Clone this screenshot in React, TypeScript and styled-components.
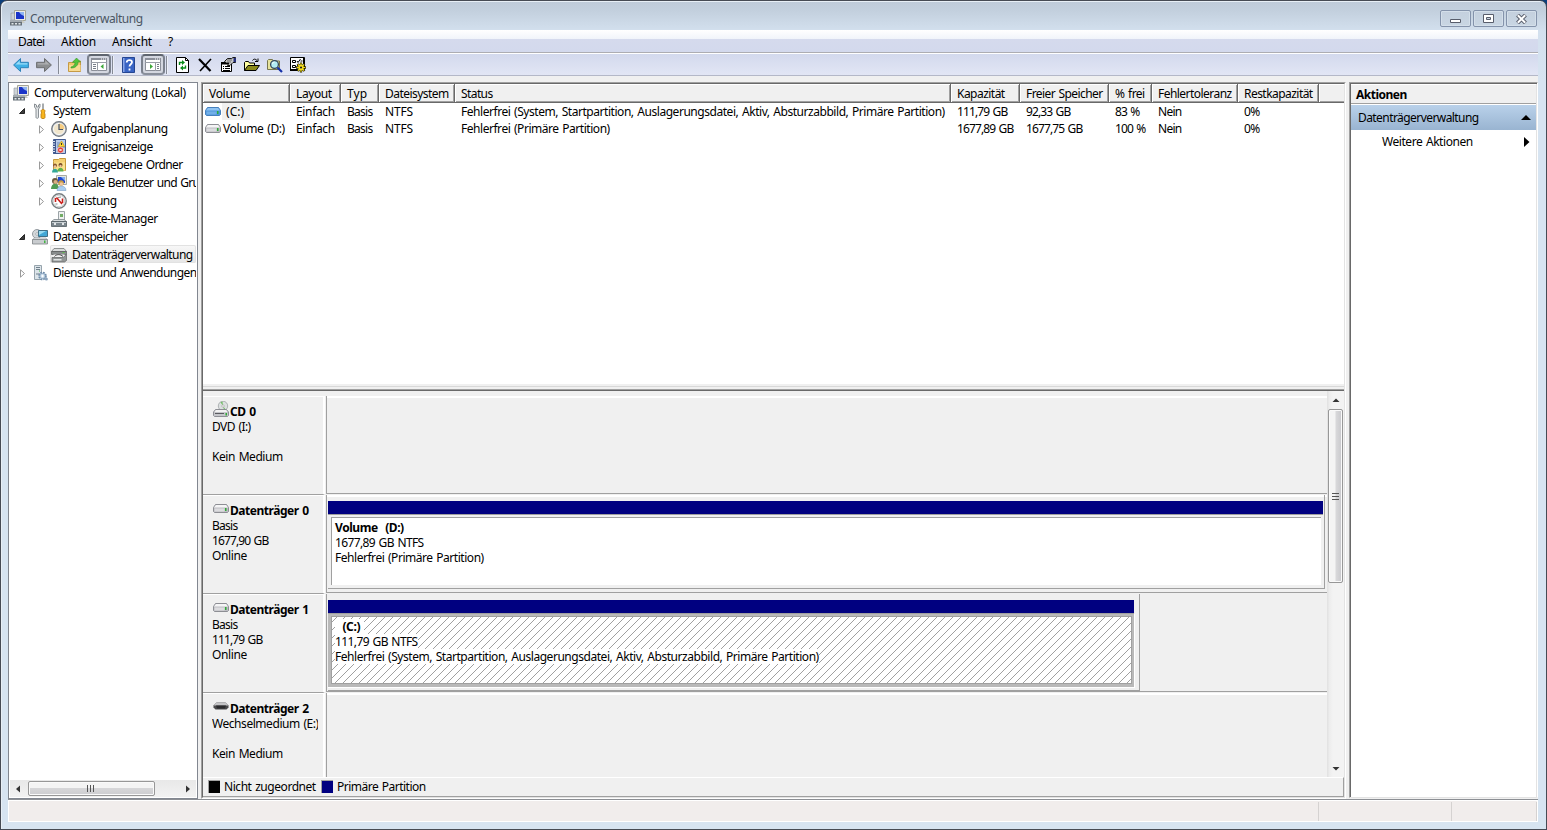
import React, { useLayoutEffect, useRef } from "react";
import styled, { createGlobalStyle, css } from "styled-components";

const Global = createGlobalStyle`
  * { box-sizing: border-box; }
  body { margin: 0; background: #0c3f7c; overflow: hidden; }
  #root { width: 1547px; height: 830px; }
  svg { display: block; flex: none; }
`;

/* ---------- text ---------- */

const Txt = styled.span<{ $bold?: boolean; $color?: string; $bg?: string }>`
  display: inline-block;
  white-space: pre;
  flex: none;
  line-height: 15px;
  word-spacing: 1px;
  font-weight: ${(p) => (p.$bold ? 700 : 400)};
  color: ${(p) => p.$color || "#000"};
  background: ${(p) => p.$bg || "transparent"};
`;

type LabelProps = { children: string; w?: number; bold?: boolean; color?: string; bg?: string };

/* Tracks the text so that its letters span the given width, side bearing included. */
function Label({ children, w, bold, color, bg }: LabelProps) {
  const ref = useRef<HTMLSpanElement>(null);
  useLayoutEffect(() => {
    const el = ref.current;
    if (!el || !w) return;
    el.style.letterSpacing = "0px";
    const natural = el.getBoundingClientRect().width;
    el.style.letterSpacing = `${(w - 0.8 - natural) / (children.length - 1)}px`;
  }, [children, w]);
  return (
    <Txt ref={ref} $bold={bold} $color={color} $bg={bg}>
      {children}
    </Txt>
  );
}

/* ---------- window frame ---------- */

const Window = styled.div`
  width: 1547px;
  height: 830px;
  display: flex;
  flex-direction: column;
  padding: 0 8px 7px 7px;
  border: 1px solid #474b54;
  border-radius: 7px 7px 0 0;
  background: linear-gradient(#bfcbd9 0, #c3d0de 10px, #d3e0ee 30px, #d7e4f1 80px);
  box-shadow: inset 1px 1px 0 #e8eff6;
  font-family: "Noto Sans", "Open Sans", sans-serif;
  font-size: 12px;
`;

const TitleBar = styled.div`
  height: 29px;
  flex: none;
  display: flex;
  align-items: flex-start;
  justify-content: space-between;
`;

const TitleText = styled.div`
  display: flex;
  align-items: center;
  gap: 4px;
  padding: 9px 0 0 2px;
`;

const WinButtons = styled.div`
  display: flex;
  gap: 2px;
  padding: 9px 1px 0 0;
`;

const WinButton = styled.div`
  width: 31px;
  height: 17px;
  display: flex;
  align-items: center;
  justify-content: center;
  border: 1px solid #8493ab;
  border-radius: 2px;
  background: linear-gradient(#c4d0de, #c9d6e3);
  box-shadow: inset 0 0 0 1px #d4dfea;
`;

const MenuBar = styled.div`
  height: 23px;
  flex: none;
  display: flex;
  padding: 3px 0 0 10px;
  border-bottom: 1px solid #adadb2;
  background: linear-gradient(#ffffff 0, #f1f4fa 9px, #d5daed 9px, #d3d9ed 100%);
`;

const MenuItem = styled.div<{ $w: number }>`
  width: ${(p) => p.$w}px;
  flex: none;
`;

const ToolBar = styled.div`
  height: 23px;
  flex: none;
  display: flex;
  align-items: center;
  padding-left: 5px;
  border-top: 1px solid #fff;
  border-bottom: 1px solid #b4b8c8;
  background: linear-gradient(#d3d9ed, #e2e6f5);
`;

const Tool = styled.div<{ $gap: number; $pressed?: boolean }>`
  margin-left: ${(p) => p.$gap}px;
  ${(p) =>
    p.$pressed &&
    css`
      width: 24px;
      height: 21px;
      display: flex;
      align-items: center;
      justify-content: center;
      border: 2px solid #6c727f;
      border-color: #5f656f #7b818d #898f9b;
      border-radius: 4px;
      background: #d4d7e0;
    `}
`;

const ToolSep = styled.div<{ $gap: number }>`
  margin-left: ${(p) => p.$gap}px;
  width: 2px;
  height: 18px;
  background: #868b96;
  border-right: 1px solid #eceff8;
`;

const Body = styled.div`
  flex: 1;
  min-height: 0;
  display: flex;
  gap: 3px;
  padding-top: 6px;
  background: #f0f0f0;
`;

const StatusBar = styled.div`
  height: 23px;
  flex: none;
  display: flex;
  justify-content: flex-end;
  padding-right: 1px;
  border-top: 1px solid #8c8f94;
  border-bottom: 1px solid #fff;
  background: #f1edec;
  box-shadow: inset 0 1px 0 #fff, inset 1px 0 0 #fff, inset -1px 0 0 #fff;
`;

const StatusCell = styled.div<{ $w: number; $last?: boolean }>`
  width: ${(p) => p.$w}px;
  margin-top: 2px;
  border-left: 1px solid #d5d2d1;
  border-right: ${(p) => (p.$last ? "1px solid #d5d2d1" : "0")};
`;

/* ---------- tree ---------- */

const TreePane = styled.div`
  width: 190px;
  flex: none;
  display: flex;
  flex-direction: column;
  overflow: hidden;
  border: 1px solid #828790;
  background: #fff;
`;

const TreeList = styled.div`
  flex: 1;
  margin-right: 1px;
  overflow: hidden;
`;

const TreeRow = styled.div<{ $level: number }>`
  height: 18px;
  display: flex;
  align-items: center;
  padding-left: ${(p) => (p.$level === 0 ? 4 : p.$level === 1 ? 9 : 28)}px;
`;

const Expander = styled.div<{ $open?: boolean }>`
  width: 14px;
  height: 16px;
  flex: none;
  display: flex;
  align-items: center;
  padding: ${(p) => (p.$open ? "2px 0 0 0" : "3px 0 0 1px")};
`;

const TreeIcon = styled.div`
  height: 18px;
  padding-top: 2px;
`;

const TreeItem = styled.div<{ $selected?: boolean }>`
  display: flex;
  align-items: center;
  gap: 5px;
  height: 18px;
  flex: none;
  ${(p) =>
    p.$selected &&
    css`
      width: 146px;
      margin-left: -1px;
      padding-left: 1px;
      border-radius: 2px;
      background: linear-gradient(#f8f8f8, #e6e6e6);
      box-shadow: inset 0 0 0 1px #e2e2e2;
    `}
`;

const HScroll = styled.div`
  height: 17px;
  flex: none;
  display: flex;
  align-items: center;
  margin: 0 1px 1px;
  padding: 0 6px;
  background: linear-gradient(#e8e8e8, #f2f2f2);
`;

const HThumb = styled.div`
  width: 127px;
  height: 15px;
  margin: 0 31px 0 8px;
  display: flex;
  align-items: center;
  justify-content: center;
  border: 1px solid #979797;
  border-radius: 2px;
  background: linear-gradient(#f4f4f4 0 45%, #d6d6d8 50%, #cdcdd0);
  box-shadow: inset 0 0 0 1px #fafafa;
`;

/* ---------- centre ---------- */

const Center = styled.div`
  width: 1145px;
  flex: none;
  display: flex;
  flex-direction: column;
  border: 1px solid;
  border-color: #a0a0a0 #fff #fff #a0a0a0;
  background: #f0f0f0;
`;

const Inner = styled.div`
  flex: 1;
  min-height: 0;
  display: flex;
  flex-direction: column;
  border: 1px solid;
  border-color: #696969 #e3e3e3 #e3e3e3 #696969;
`;

const ListArea = styled.div`
  height: 300px;
  flex: none;
  background: #fff;
`;

const HeaderRow = styled.div`
  display: flex;
  height: 19px;
  background: #f0f0f0;
  border-bottom: 1px solid #696969;
`;

const HeaderCell = styled.div<{ $w: number }>`
  width: ${(p) => p.$w}px;
  flex: none;
  padding: 1px 0 0 6px;
  overflow: hidden;
  border-right: 1px solid #696969;
  box-shadow: inset 1px 1px 0 #fff, inset -1px -1px 0 #a0a0a0;
`;

const HeaderRest = styled.div`
  flex: 1;
  box-shadow: inset 1px 1px 0 #fff, inset 0 -1px 0 #a0a0a0;
`;

const ListRow = styled.div`
  display: flex;
  height: 17px;
  align-items: center;
`;

const Cell = styled.div<{ $w: number; $pad: number }>`
  width: ${(p) => p.$w}px;
  flex: none;
  height: 17px;
  display: flex;
  align-items: center;
  padding-left: ${(p) => p.$pad}px;
`;

const Focused = styled.div`
  height: 17px;
  display: flex;
  align-items: center;
  margin-left: 1px;
  padding: 0 6px 0 4px;
  background: #f0f0f0;
`;

const IconGap = styled.div`
  padding-left: 2px;
`;

const Splitter = styled.div`
  height: 7px;
  flex: none;
  background: #f0f0f0;
  border-bottom: 1px solid #696969;
  box-shadow: inset 0 -1px 0 #a0a0a0, inset 0 -3px 0 #f0f0f0, inset 0 -4px 0 #d8d8d8;
`;

const DiskArea = styled.div`
  flex: 1;
  min-height: 0;
  display: flex;
`;

const DiskList = styled.div`
  width: 1124px;
  flex: none;
  padding-top: 5px;
  overflow: hidden;
`;

const DiskRow = styled.div`
  height: 99px;
  display: flex;
`;

const DiskHead = styled.div`
  width: 122px;
  flex: none;
  overflow: hidden;
  padding: 7px 5px 0 9px;
  border-top: 1px solid #fff;
  border-right: 2px solid #fff;
  border-bottom: 1px solid #a0a0a0;
`;

const DiskTitle = styled.div`
  display: flex;
  height: 15px;
  align-items: flex-start;
`;

const Line = styled.div`
  height: 15px;
  display: flex;
  overflow: hidden;
`;

const DiskBody = styled.div<{ $top?: boolean }>`
  flex: 1;
  height: 98px;
  margin-left: 1px;
  padding-left: 1px;
  border-left: 1px solid #a0a0a0;
  border-bottom: 1px solid #a0a0a0;
  box-shadow: inset 0 ${(p) => (p.$top ? 2 : 0)}px 0 #fff, inset 0 ${(p) => (p.$top ? 1 : 0)}px 0 #f0f0f0;
`;

const Frame = styled.div<{ $w: number; $h: number }>`
  width: ${(p) => p.$w}px;
  height: ${(p) => p.$h}px;
  padding-top: 6px;
  border-right: 1px solid #a0a0a0;
  border-bottom: 1px solid #a0a0a0;
`;

const Bar = styled.div<{ $w: number }>`
  width: ${(p) => p.$w}px;
  height: 14px;
  background: #000080;
  border-bottom: 1px solid #a0a0a0;
`;

const Partition = styled.div<{ $w: number; $selected?: boolean }>`
  width: ${(p) => p.$w}px;
  height: ${(p) => (p.$selected ? 74 : 70)}px;
  padding: 2px 3px 3px;
  background: ${(p) => (p.$selected ? "#b9b9b9" : "#f0f0f0")};
  border-right: ${(p) => (p.$selected ? "1px solid #fff" : "0")};
  border-bottom: ${(p) => (p.$selected ? "1px solid #fff" : "0")};
`;

const PartitionBox = styled.div<{ $selected?: boolean }>`
  position: relative;
  height: 68px;
  padding: 2px 0 0 3px;
  margin-right: -1px;
  background: #fff;
  border: 1px solid #a0a0a0;
  ${(p) => !p.$selected && css`border-right: 0; border-bottom: 0;`}
`;

const HatchLayer = styled.svg`
  position: absolute;
  inset: 0;
  width: 100%;
  height: 100%;
`;

const PartitionText = styled.div`
  position: relative;
  display: flex;
  flex-direction: column;
  align-items: flex-start;
  height: 45px;
`;

const VScroll = styled.div`
  width: 17px;
  flex: none;
  display: flex;
  flex-direction: column;
  align-items: center;
  padding: 7px 0 6px;
  background: linear-gradient(90deg, #e3e3e3 1px, #ececec 2px, #f3f3f3 6px);
`;

const VThumb = styled.div`
  width: 15px;
  height: 174px;
  margin: 7px 0 auto;
  display: flex;
  align-items: center;
  justify-content: center;
  border: 1px solid #979797;
  border-radius: 2px;
  background: linear-gradient(90deg, #f4f4f4 0 45%, #d8d8da 55%, #c8c8cc);
  box-shadow: inset 0 0 0 1px #fafafa;
`;

const Legend = styled.div`
  height: 20px;
  flex: none;
  display: flex;
  align-items: center;
  padding: 0 0 1px 4px;
  border-top: 1px solid #fff;
  border-right: 1px solid #a0a0a0;
  border-bottom: 1px solid #a0a0a0;
`;

const LegendItem = styled.div<{ $w: number }>`
  width: ${(p) => p.$w}px;
  display: flex;
  align-items: center;
  flex: none;
`;

const Swatch = styled.div<{ $c: string }>`
  width: 12px;
  height: 13px;
  border: 1px solid #a0a0a0;
  border-right: 0;
  border-bottom: 0;
  background: ${(p) => p.$c};
  margin: 0 4px 0 1px;
`;

/* ---------- actions ---------- */

const Actions = styled.div`
  width: 189px;
  height: 716px;
  flex: none;
  border: 1px solid;
  border-color: #a0a0a0 #fff #e3e3e3 #a0a0a0;
  background: #fff;
  box-shadow: inset 1px 1px 0 #696969, inset -1px 0 0 #e3e3e3;
`;

const ActionsHead = styled.div`
  height: 20px;
  margin: 1px 1px 0 1px;
  padding: 1px 0 0 5px;
  background: #f0f0f0;
  border-top: 1px solid #fff;
  border-bottom: 1px solid #a0a0a0;
`;

const ActionRow = styled.div<{ $head?: boolean }>`
  height: ${(p) => (p.$head ? 25 : 23)}px;
  margin: ${(p) => (p.$head ? "1px 1px 0 1px" : "0 1px")};
  display: flex;
  align-items: center;
  justify-content: space-between;
  padding: 0 5px 0 ${(p) => (p.$head ? 7 : 31)}px;
  background: ${(p) => (p.$head ? "linear-gradient(#b9d1ea, #99b4d1)" : "#fff")};
`;

/* ---------- icons ---------- */

const Svg = ({ children, w = 16, h = 16 }: { children: React.ReactNode; w?: number; h?: number }) => (
  <svg width={w} height={h} viewBox={`0 0 ${w} ${h}`} fill="none">
    {children}
  </svg>
);

const ComputerIcon = () => (
  <Svg>
    <path d="M4.500.5h11v10h-11z" fill="#ecece6" stroke="#a4a496" />
    <path d="M6 2h8v7H6z" fill="#1b35c8" />
    <path d="M9 2h5v4C12 5 10 4 9 2z" fill="#8fb4f3" />
    <path d="M8 10.500h5l2 2.500H8z" fill="#c9cac2" />
    <path d="M1 3h3.500v7H1z" fill="#cdd3d8" stroke="#8d949b" strokeWidth=".6" />
    <path d="M0 10h12v2H0z" fill="#a3abb1" />
    <path d="M0 12h12v3.500H0z" fill="#667078" />
    <path d="M1.500 13h2v1.500h-2zM5 13h2v1.500H5zM8.500 13h2v1.500h-2z" fill="#dfe5e8" />
  </Svg>
);

const ArrowIcon = ({ flip, dark, mid, light }: { flip?: boolean; dark: string; mid: string; light: string }) => (
  <Svg>
    <g transform={flip ? "translate(16 0) scale(-1 1)" : undefined}>
      <path d="M.6 8L7.500 1.500v3.800h7.900v5.400H7.500v3.800z" fill={mid} stroke={dark} strokeLinejoin="round" />
      <path d="M2.500 7.600L6.700 3.700v2.500h7.700v1.400z" fill={light} />
    </g>
  </Svg>
);

const FolderUpIcon = () => (
  <Svg>
    <path d="M1.500 5.500h4l1-1.500h7v10.500h-12z" fill="#efc76f" stroke="#c59a45" />
    <path d="M2 8h11.500v6H2z" fill="#f8db92" />
    <path d="M4 10c3-1 4-2 4-4.500H5.500L9.500 1 13.500 5H11c0 4-3 6-7 6z" fill="#54c43a" stroke="#36962b" strokeWidth=".6" />
  </Svg>
);

const PaneIcon = ({ right }: { right?: boolean }) => (
  <Svg w={18} h={15}>
    <path d="M1.500 1.500h15v12h-15z" fill="#fff" stroke="#8b8f99" />
    <path d="M1 1h16v2H1z" fill="#8b8f99" />
    <path d="M11 1.500h1v1h-1zM13 1.500h1v1h-1zM15 1.500h1v1h-1z" fill="#fff" />
    <path d="M1 5.500h16" stroke="#9a9ea7" />
    {right ? (
      <>
        <path d="M11.500 5.500V14" stroke="#9a9ea7" />
        <path d="M6 7v5l3-2.500z" fill="#3da739" />
        <path d="M13 7.500h2M13 9.500h2M13 11.500h2" stroke="#777d88" />
      </>
    ) : (
      <>
        <path d="M7.500 5.500V14" stroke="#9a9ea7" />
        <path d="M13.500 7v5l-3-2.500z" fill="#3da739" />
        <path d="M3 7.500h3M3 9.500h3M3 11.500h3" stroke="#777d88" />
      </>
    )}
  </Svg>
);

const HelpIcon = () => (
  <Svg>
    <path d="M2.500.5h12v15h-12z" fill="#3863c4" stroke="#254692" />
    <path d="M3 1h1.500v14H3z" fill="#89a6e8" />
    <path d="M6.700 5.500c0-3.200 5.300-3 5.300-.2 0 2-2.500 2-2.500 4.200M9.500 11.500v2" stroke="#fff" strokeWidth="1.800" />
  </Svg>
);

const RefreshIcon = () => (
  <Svg>
    <path d="M2.500.5h9l3 3v12h-12z" fill="#fff" stroke="#000" />
    <path d="M11.500.5v3h3" stroke="#000" />
    <path d="M5.500 8V5.500H9M11.500 8.500V11H8" stroke="#0a8a1a" strokeWidth="1.400" />
    <path d="M8 3l3 2.500L8 8zM9 8.500v5L6 11z" fill="#0a8a1a" />
  </Svg>
);

const DeleteIcon = () => (
  <Svg>
    <path d="M2 2l11.500 12" stroke="#000" strokeWidth="2.200" />
    <path d="M14 2L3 14" stroke="#000" strokeWidth="1.600" />
  </Svg>
);

const PropsIcon = () => (
  <Svg>
    <path d="M.5 5.500h10v9H.5z" fill="#fff" stroke="#000" />
    <path d="M0 5h11v2.500H0z" fill="#000" />
    <path d="M2 9.500h1M4 9.500h5M2 11.500h1M4 11.500h5M2 13.500h7" stroke="#000" />
    <path d="M3.500 4.500l3-3h4l1.500-1h2.500v5h-2.500L9 8.500H6.500L8 6H5.500z" fill="#c8c8c8" stroke="#000" strokeWidth=".9" />
    <path d="M6 3h5M6 5h4" stroke="#555" strokeWidth=".8" />
    <path d="M12.500 1H15v4h-2.500z" fill="#26307a" />
  </Svg>
);

const OpenIcon = () => (
  <Svg>
    <path d="M.5 13.500v-8l1-1h3l1 1.500h5V8" fill="#ffffa0" stroke="#000" />
    <path d="M.5 13.500l3.500-5h11.500l-3.500 5z" fill="#8a8a1a" stroke="#000" />
    <path d="M8.500 3.500c1-1.800 3-1.800 4.500 0M14 1.500v3h-3" stroke="#000" />
  </Svg>
);

const SearchIcon = () => (
  <Svg>
    <path d="M.5 12.500v-9l1-1h4l1 1.500h6v8.500z" fill="#e6e39c" stroke="#77764d" />
    <circle cx="7.500" cy="7.500" r="3.900" fill="#b2ecf3" stroke="#35475c" strokeWidth="1.300" />
    <path d="M5.500 7c0-1 1-2 2-2" stroke="#fff" />
    <path d="M10.500 10.500l4.500 4.500" stroke="#1430a8" strokeWidth="2.200" />
  </Svg>
);

const SettingsIcon = () => (
  <Svg>
    <path d="M.5.5h14v12H.5z" fill="#fff" stroke="#000" />
    <path d="M14 1v6M0 13h8" stroke="#000" strokeWidth="2" />
    <path d="M2.500 3.500h3v2h-3zM2.500 8.500h3v2h-3z" fill="#fff" stroke="#000" />
    <path d="M7 4l1 1.500L10.500 2M7 8.500h1.500M10.500 4h2" stroke="#000" />
    <path d="M11 5.500v10M6 10.500h10M7.500 7l7 7M14.500 7l-7 7" stroke="#2a2600" strokeWidth="2.300" />
    <path d="M11 6.200v8.600M6.700 10.500h8.600M8 7.500l6 6M14 7.500l-6 6" stroke="#f4dc1e" strokeWidth="1.200" />
    <circle cx="11" cy="10.500" r="2.700" fill="#f4dc1e" />
    <circle cx="11" cy="10.500" r="1.100" fill="#222" />
  </Svg>
);

const ToolsIcon = () => (
  <Svg>
    <path d="M2.500 1v3l1.500 2v8.500c0 1 2.500 1 2.500 0V6L8 4V1L6.500 2v2H4.500V2z" fill="#e2e5e7" stroke="#7f868b" strokeWidth=".9" />
    <path d="M11 .5v6" stroke="#8a8f93" strokeWidth="1.500" />
    <path d="M9 8c0-2 4-2 4 0l-.6 2 .6 1v3.500c0 1.500-4 1.500-4 0V11l.6-1z" fill="#f7b51e" stroke="#b9780b" strokeWidth=".8" />
  </Svg>
);

const ClockIcon = () => (
  <Svg>
    <circle cx="8" cy="8" r="7.300" fill="#c3c8cc" stroke="#71787f" strokeWidth="1.200" />
    <circle cx="8" cy="8" r="5.600" fill="#f1e6cc" stroke="#fff" strokeWidth=".8" />
    <path d="M8 2.500A5.500 5.500 0 0 1 13.500 8H8z" fill="#f5cc81" />
    <path d="M8 3v5.500h4" stroke="#47556b" strokeWidth="1.200" />
  </Svg>
);

const EventIcon = () => (
  <Svg>
    <path d="M2.500.5h12v14h-12z" fill="#b8cbe8" stroke="#435b91" />
    <path d="M2 1h3v13.500H2z" fill="#40588e" />
    <path d="M1 2.500h3M1 5h3M1 7.500h3M1 10h3M1 12.500h3" stroke="#dfe6f2" />
    <path d="M6 4h3M6 6h2M6 8h8M6 12h3" stroke="#6c86b7" />
    <path d="M10.500 2l3.200 5.500H7.300z" fill="#ffd92f" stroke="#c49511" strokeWidth=".6" />
    <circle cx="9.500" cy="11" r="3" fill="#e33d35" stroke="#fff" strokeWidth=".5" />
    <path d="M8.500 10l2 2M10.500 10l-2 2" stroke="#fff" />
    <path d="M10.500 4v2" stroke="#333" />
  </Svg>
);

const ShareIcon = () => (
  <Svg>
    <path d="M2.500 4.500v-2h5l1-1h6v12h-12z" fill="#f4cf70" stroke="#c79b3b" />
    <path d="M3 5.500h11v8H3z" fill="#fbe08c" />
    <circle cx="4" cy="8.500" r="2" fill="#8b5730" />
    <circle cx="9.500" cy="8" r="2" fill="#754823" />
    <path d="M1 15.500c0-5 6-5 6 0z" fill="#35a898" />
    <path d="M6.500 14.500c0-5 6-5 6 0z" fill="#60b24c" />
    <circle cx="4" cy="9.500" r="1.200" fill="#efc39d" />
    <circle cx="9.500" cy="9" r="1.200" fill="#efc39d" />
  </Svg>
);

const UsersIcon = () => (
  <Svg>
    <path d="M5.500.5h10v9h-10z" fill="#e5e6e0" stroke="#a8aaa2" />
    <path d="M7 2h7v6H7z" fill="#2147cf" />
    <path d="M10 2h4v4z" fill="#84aef1" />
    <circle cx="4" cy="6" r="3" fill="#6d5b3d" />
    <circle cx="4.500" cy="7" r="2" fill="#d9ad83" />
    <path d="M0 14c0-7 8-7 8 0z" fill="#4f9b54" />
    <circle cx="10" cy="8" r="2.800" fill="#c99c43" />
    <circle cx="10.300" cy="9" r="1.800" fill="#f0c69d" />
    <path d="M6 15.500c0-6 9-6 9 0z" fill="#a9cdf0" stroke="#6f94bd" strokeWidth=".5" />
  </Svg>
);

const PerfIcon = () => (
  <Svg>
    <circle cx="8" cy="8" r="7.200" fill="#fff" stroke="#777d80" strokeWidth="1.400" />
    <circle cx="8" cy="8" r="5.700" stroke="#c1c6c8" strokeWidth=".8" />
    <path d="M4.500 5v4M5.500 4.500l5.500 6.500M11.500 5.500v4.500" stroke="#ca1f1b" strokeWidth="1.600" />
    <path d="M7 4.500l3-.5M4.500 11h2" stroke="#888" />
  </Svg>
);

const DeviceIcon = () => (
  <Svg>
    <path d="M7.500.5h6v9h-6z" fill="#eef0f0" stroke="#9ca4a7" />
    <path d="M9 3h3v3H9z" fill="#72ac66" />
    <path d="M3 8.500h10l2.500 2H.5z" fill="#d8dcde" stroke="#7d868b" strokeWidth=".8" />
    <path d="M.5 10.500h15v5H.5z" fill="#7b868d" stroke="#535d63" strokeWidth=".8" />
    <path d="M1 11h14v1H1z" fill="#c6cdd1" />
    <path d="M3 12h2v2H3zM11 12h2v2h-2z" fill="#e3e6e8" />
  </Svg>
);

const StorageIcon = () => (
  <Svg>
    <circle cx="5" cy="5" r="4.500" fill="#d4d8db" stroke="#949ba0" />
    <circle cx="5" cy="5" r="1.300" fill="#fff" stroke="#8b9297" strokeWidth=".6" />
    <path d="M6.500 1.500h9v6h-9z" fill="#43a8d6" stroke="#427187" />
    <path d="M7 2h7l-7 4z" fill="#9adcf2" />
    <path d="M2 9h12l1.500 2H.5z" fill="#f2f3f4" stroke="#9a9fa3" strokeWidth=".7" />
    <path d="M.5 10.500h15v4.500H.5z" fill="#c9cccf" stroke="#7e8387" strokeWidth=".8" />
    <path d="M12 11.500h1.500V14H12z" fill="#42b642" />
  </Svg>
);

const DiskMgmtIcon = () => (
  <Svg>
    <path d="M3 1.500h10l2.500 3H.5z" fill="#dadcdc" stroke="#747777" strokeWidth=".8" />
    <path d="M.5 4.500h15v3H.5z" fill="#888c8c" stroke="#565959" strokeWidth=".7" />
    <path d="M2.500 7.500h11v3h-11z" fill="#f1f1f1" />
    <path d="M3.500 9.500c2-2.500 6-2.500 8.500 0" stroke="#444" />
    <path d="M1 10.500h11l3.500-3v6l-2 1.500H1z" fill="#929696" stroke="#5e6161" strokeWidth=".7" />
    <path d="M2.500 12h8v1.500h-8z" fill="#e1e4e4" />
    <path d="M11.500 5.500h2" stroke="#5cc34b" />
  </Svg>
);

const ServicesIcon = () => (
  <Svg>
    <path d="M2.500.5h7v14h-7z" fill="#dce4e9" stroke="#97a4ad" />
    <path d="M4 2.500h4M4 4.500h4M4 9h4" stroke="#71818d" />
    <path d="M7 6h1" stroke="#49b54c" />
    <circle cx="10.500" cy="11" r="3.300" fill="#bfd6ea" stroke="#718daa" strokeWidth="2" strokeDasharray="1.700 .9" />
    <circle cx="10.500" cy="11" r="2.500" fill="#d2e2f0" stroke="#86a0b9" strokeWidth=".6" />
    <circle cx="10.500" cy="11" r="1" fill="#fff" />
    <circle cx="14.400" cy="14" r="1.500" fill="#8aa3bd" />
  </Svg>
);

const DriveIcon = ({ top = "#f5f5f6", front = "#bdbdc3", edge = "#85868c" }) => (
  <Svg h={9}>
    <path d="M2.500.5h11l2 3v4l-1 1H1.500l-1-1v-4z" fill={front} stroke={edge} strokeWidth=".9" />
    <path d="M3 1h10l2 2.500H1z" fill={top} />
    <path d="M1.500 4.500h10v3h-10z" fill={top} opacity=".55" />
    <path d="M12 4h1.500v3H12z" fill="#2eab36" />
  </Svg>
);

const CdIcon = () => (
  <Svg>
    <ellipse cx="10" cy="5" rx="4.700" ry="4.800" fill="#dcdfe0" stroke="#a0a4a6" strokeWidth=".8" />
    <path d="M10 5L7.500 1.200l2-.7zM10 5l3 4h-2z" fill="#72bf67" />
    <circle cx="10" cy="5" r="1.200" fill="#fff" stroke="#888" strokeWidth=".5" />
    <path d="M2.500 8.500h11l2 2.500v3.500l-1 1H1.500l-1-1V11z" fill="#c5c6ca" stroke="#85868c" strokeWidth=".9" />
    <path d="M3 9h10l1.500 2h-13z" fill="#f2f2f2" />
    <path d="M2 12.500h9" stroke="#5a5b60" />
    <path d="M12.500 12H14v2.500h-1.500z" fill="#2eab36" />
  </Svg>
);

const RemovableIcon = () => (
  <Svg h={9}>
    <path d="M3.500.5h9l3 3v2l-2 2H2.500l-2-2v-2z" fill="#4a4a4c" />
    <path d="M3.500.5h9l3 3H.5z" fill="#c4c4c6" />
    <path d="M3 3.500h10l-1 3H4z" fill="#2c2c2e" />
  </Svg>
);

const Triangle = ({ d, w, h, fill = "#000", stroke }: { d: string; w: number; h: number; fill?: string; stroke?: string }) => (
  <svg width={w} height={h} viewBox={`0 0 ${w} ${h}`}>
    <path d={d} fill={fill} stroke={stroke} />
  </svg>
);

const Hatch = () => (
  <HatchLayer shapeRendering="crispEdges">
    <defs>
      <pattern id="hatch" width="8" height="8" patternUnits="userSpaceOnUse">
        {[0, 1, 2, 3, 4, 5, 6, 7].map((i) => (
          <rect key={i} x={(12 - i) % 8} y={i} width="1" height="1" fill="#a0a0a0" />
        ))}
      </pattern>
    </defs>
    <rect width="100%" height="100%" fill="url(#hatch)" />
  </HatchLayer>
);

/* ---------- data ---------- */

type Node = { level: number; text: string; w?: number; icon: React.ReactNode; state?: "open" | "closed"; selected?: boolean };

const tree: Node[] = [
  { level: 0, text: "Computerverwaltung (Lokal)", w: 153, icon: <ComputerIcon /> },
  { level: 1, text: "System", w: 39, icon: <ToolsIcon />, state: "open" },
  { level: 2, text: "Aufgabenplanung", w: 97, icon: <ClockIcon />, state: "closed" },
  { level: 2, text: "Ereignisanzeige", w: 82, icon: <EventIcon />, state: "closed" },
  { level: 2, text: "Freigegebene Ordner", w: 112, icon: <ShareIcon />, state: "closed" },
  { level: 2, text: "Lokale Benutzer und Gruppen", w: 155, icon: <UsersIcon />, state: "closed" },
  { level: 2, text: "Leistung", w: 46, icon: <PerfIcon />, state: "closed" },
  { level: 2, text: "Geräte-Manager", w: 87, icon: <DeviceIcon /> },
  { level: 1, text: "Datenspeicher", w: 76, icon: <StorageIcon />, state: "open" },
  { level: 2, text: "Datenträgerverwaltung", w: 122, icon: <DiskMgmtIcon />, selected: true },
  { level: 1, text: "Dienste und Anwendungen", w: 145, icon: <ServicesIcon />, state: "closed" },
];

type Col = { title: string; tw: number; w: number; c: [string, number]; d: [string, number] };

const cols: Col[] = [
  { title: "Volume", tw: 42, w: 87, c: ["(C:)", 19], d: ["Volume (D:)", 63] },
  { title: "Layout", tw: 37, w: 51, c: ["Einfach", 40], d: ["Einfach", 40] },
  { title: "Typ", tw: 21, w: 38, c: ["Basis", 27], d: ["Basis", 27] },
  { title: "Dateisystem", tw: 65, w: 76, c: ["NTFS", 29], d: ["NTFS", 29] },
  {
    title: "Status", tw: 33, w: 496,
    c: ["Fehlerfrei (System, Startpartition, Auslagerungsdatei, Aktiv, Absturzabbild, Primäre Partition)", 485],
    d: ["Fehlerfrei (Primäre Partition)", 150],
  },
  { title: "Kapazität", tw: 49, w: 69, c: ["111,79 GB", 52], d: ["1677,89 GB", 58] },
  { title: "Freier Speicher", tw: 78, w: 89, c: ["92,33 GB", 46], d: ["1677,75 GB", 58] },
  { title: "% frei", tw: 31, w: 43, c: ["83 %", 26], d: ["100 %", 32] },
  { title: "Fehlertoleranz", tw: 75, w: 86, c: ["Nein", 25], d: ["Nein", 25] },
  { title: "Restkapazität", tw: 70, w: 81, c: ["0%", 17], d: ["0%", 17] },
];

type DiskProps = {
  icon: React.ReactNode;
  title: [string, number];
  lines: ([string, number] | null)[];
  top?: boolean;
  children?: React.ReactNode;
};

const Disk = ({ icon, title, lines, top, children }: DiskProps) => (
  <DiskRow>
    <DiskHead>
      <DiskTitle>
        {icon}
        <Label bold w={title[1]}>{title[0]}</Label>
      </DiskTitle>
      {lines.map((l, i) => (
        <Line key={i}>{l && <Label w={l[1]}>{l[0]}</Label>}</Line>
      ))}
    </DiskHead>
    <DiskBody $top={top}>{children}</DiskBody>
  </DiskRow>
);

const IconSlot = styled.div<{ $shift?: number }>`
  width: 18px;
  flex: none;
  padding-left: 1px;
  margin-top: ${(p) => p.$shift || 0}px;
`;

export default function App() {
  return (
    <>
      <Global />
      <Window>
        <TitleBar>
          <TitleText>
            <ComputerIcon />
            <Label w={114} color="#4b5663">Computerverwaltung</Label>
          </TitleText>
          <WinButtons>
            <WinButton>
              <Svg w={12} h={10}><path d="M.5 5.500h10v3H.5z" fill="#fff" stroke="#585d6b" /></Svg>
            </WinButton>
            <WinButton>
              <Svg w={12} h={10}>
                <path d="M.5 .5h10v8H.5z" fill="#fff" stroke="#585d6b" />
                <path d="M3.500 3.500h4v2h-4z" fill="#c6d2df" stroke="#585d6b" />
              </Svg>
            </WinButton>
            <WinButton>
              <Svg w={12} h={10}>
                <path d="M1.500 1l8 8M9.500 1l-8 8" stroke="#585d6b" strokeWidth="4" />
                <path d="M1.800 1.300l7.400 7.400M9.200 1.300L1.800 8.700" stroke="#fff" strokeWidth="2" />
              </Svg>
            </WinButton>
          </WinButtons>
        </TitleBar>
        <MenuBar>
          <MenuItem $w={43}><Label w={28}>Datei</Label></MenuItem>
          <MenuItem $w={51}><Label w={36}>Aktion</Label></MenuItem>
          <MenuItem $w={56}><Label w={41}>Ansicht</Label></MenuItem>
          <MenuItem $w={20}><Label>?</Label></MenuItem>
        </MenuBar>
        <ToolBar>
          <Tool $gap={0}><ArrowIcon dark="#2f83b8" mid="#3fb0e6" light="#9bdcf8" /></Tool>
          <Tool $gap={7}><ArrowIcon flip dark="#6c6e70" mid="#8c8e90" light="#aeb0b2" /></Tool>
          <ToolSep $gap={6} />
          <Tool $gap={7}><FolderUpIcon /></Tool>
          <Tool $gap={4} $pressed><PaneIcon /></Tool>
          <ToolSep $gap={1} />
          <Tool $gap={6}><HelpIcon /></Tool>
          <Tool $gap={5} $pressed><PaneIcon right /></Tool>
          <ToolSep $gap={1} />
          <Tool $gap={6}><RefreshIcon /></Tool>
          <Tool $gap={7}><DeleteIcon /></Tool>
          <Tool $gap={8}><PropsIcon /></Tool>
          <Tool $gap={7}><OpenIcon /></Tool>
          <Tool $gap={7}><SearchIcon /></Tool>
          <Tool $gap={7}><SettingsIcon /></Tool>
        </ToolBar>
        <Body>
          <TreePane>
            <TreeList>
              {tree.map((n) => (
                <TreeRow key={n.text} $level={n.level}>
                  {n.level > 0 && (
                    <Expander $open={n.state === "open"}>
                      {n.state === "open" && <Triangle w={9} h={9} d="M6.500 1.500v5h-5z" fill="#3c3c3c" stroke="#262626" />}
                      {n.state === "closed" && <Triangle w={8} h={11} d="M1.500 1.800v7.400L5.500 5.500z" fill="#fff" stroke="#9a9a9a" />}
                    </Expander>
                  )}
                  <TreeItem $selected={n.selected}>
                    <TreeIcon>{n.icon}</TreeIcon>
                    <Label w={n.w}>{n.text}</Label>
                  </TreeItem>
                </TreeRow>
              ))}
            </TreeList>
            <HScroll>
              <Triangle w={4} h={8} d="M4 .5v7L0 4z" fill="#333" />
              <HThumb>
                <Svg w={9} h={7}><path d="M.5 0v7M3.500 0v7M6.500 0v7" stroke="#555" /></Svg>
              </HThumb>
              <Triangle w={4} h={8} d="M0 .5v7L4 4z" fill="#333" />
            </HScroll>
          </TreePane>
          <Center>
            <Inner>
              <ListArea>
                <HeaderRow>
                  {cols.map((c) => (
                    <HeaderCell key={c.title} $w={c.w}>
                      <Label w={c.tw}>{c.title}</Label>
                    </HeaderCell>
                  ))}
                  <HeaderRest />
                </HeaderRow>
                {(["c", "d"] as const).map((k) => (
                  <ListRow key={k}>
                    {cols.map((c, i) => (
                      <Cell key={c.title} $w={c.w} $pad={i === 0 ? 2 : 6}>
                        {i === 0 && (k === "c" ? <DriveIcon top="#8fc3f2" front="#4f97dc" edge="#3b77b8" /> : <DriveIcon />)}
                        {i === 0 && k === "c" ? (
                          <Focused><Label w={c[k][1]}>{c[k][0]}</Label></Focused>
                        ) : i === 0 ? (
                          <IconGap><Label w={c[k][1]}>{c[k][0]}</Label></IconGap>
                        ) : (
                          <Label w={c[k][1]}>{c[k][0]}</Label>
                        )}
                      </Cell>
                    ))}
                  </ListRow>
                ))}
              </ListArea>
              <Splitter />
              <DiskArea>
                <DiskList>
                  <Disk top icon={<IconSlot $shift={-3}><CdIcon /></IconSlot>} title={["CD 0", 27]} lines={[["DVD (I:)", 40], null, ["Kein Medium", 72]]} />
                  <Disk top icon={<IconSlot $shift={1}><DriveIcon /></IconSlot>} title={["Datenträger 0", 80]} lines={[["Basis", 27], ["1677,90 GB", 58], ["Online", 36]]}>
                    <Frame $w={997} $h={94}>
                      <Bar $w={995} />
                      <Partition $w={995}>
                        <PartitionBox>
                          <PartitionText>
                            <Label bold w={70}>{"Volume  (D:)"}</Label>
                            <Label w={90}>1677,89 GB NTFS</Label>
                            <Label w={150}>Fehlerfrei (Primäre Partition)</Label>
                          </PartitionText>
                        </PartitionBox>
                      </Partition>
                    </Frame>
                  </Disk>
                  <Disk icon={<IconSlot $shift={1}><DriveIcon /></IconSlot>} title={["Datenträger 1", 80]} lines={[["Basis", 27], ["111,79 GB", 52], ["Online", 36]]}>
                    <Frame $w={812} $h={97}>
                      <Bar $w={806} />
                      <Partition $w={807} $selected>
                        <PartitionBox $selected>
                          <Hatch />
                          <PartitionText>
                            <Label bold bg="#fff" w={30}>{"  (C:) "}</Label>
                            <Label bg="#fff" w={84}>111,79 GB NTFS</Label>
                            <Label bg="#fff" w={485}>Fehlerfrei (System, Startpartition, Auslagerungsdatei, Aktiv, Absturzabbild, Primäre Partition)</Label>
                          </PartitionText>
                        </PartitionBox>
                      </Partition>
                    </Frame>
                  </Disk>
                  <Disk top icon={<IconSlot $shift={1}><RemovableIcon /></IconSlot>} title={["Datenträger 2", 80]} lines={[["Wechselmedium (E:)", 108], null, ["Kein Medium", 72]]} />
                </DiskList>
                <VScroll>
                  <Triangle w={8} h={4} d="M.5 4h7L4 .5z" fill="#333" />
                  <VThumb>
                    <Svg w={7} h={9}><path d="M0 1.500h7M0 4.500h7M0 7.500h7" stroke="#555" /></Svg>
                  </VThumb>
                  <Triangle w={8} h={4} d="M.5 0h7L4 3.500z" fill="#333" />
                </VScroll>
              </DiskArea>
              <Legend>
                <LegendItem $w={113}>
                  <Swatch $c="#000" />
                  <Label w={93}>Nicht zugeordnet</Label>
                </LegendItem>
                <LegendItem $w={120}>
                  <Swatch $c="#000080" />
                  <Label w={90}>Primäre Partition</Label>
                </LegendItem>
              </Legend>
            </Inner>
          </Center>
          <Actions>
            <ActionsHead><Label bold w={52}>Aktionen</Label></ActionsHead>
            <ActionRow $head>
              <Label w={122}>Datenträgerverwaltung</Label>
              <Triangle w={10} h={5} d="M0 5h10L5 0z" />
            </ActionRow>
            <ActionRow>
              <Label w={92}>Weitere Aktionen</Label>
              <Triangle w={8} h={10} d="M1 0v10l5.500-5z" />
            </ActionRow>
          </Actions>
        </Body>
        <StatusBar>
          <StatusCell $w={133} />
          <StatusCell $w={86} $last />
        </StatusBar>
      </Window>
    </>
  );
}
